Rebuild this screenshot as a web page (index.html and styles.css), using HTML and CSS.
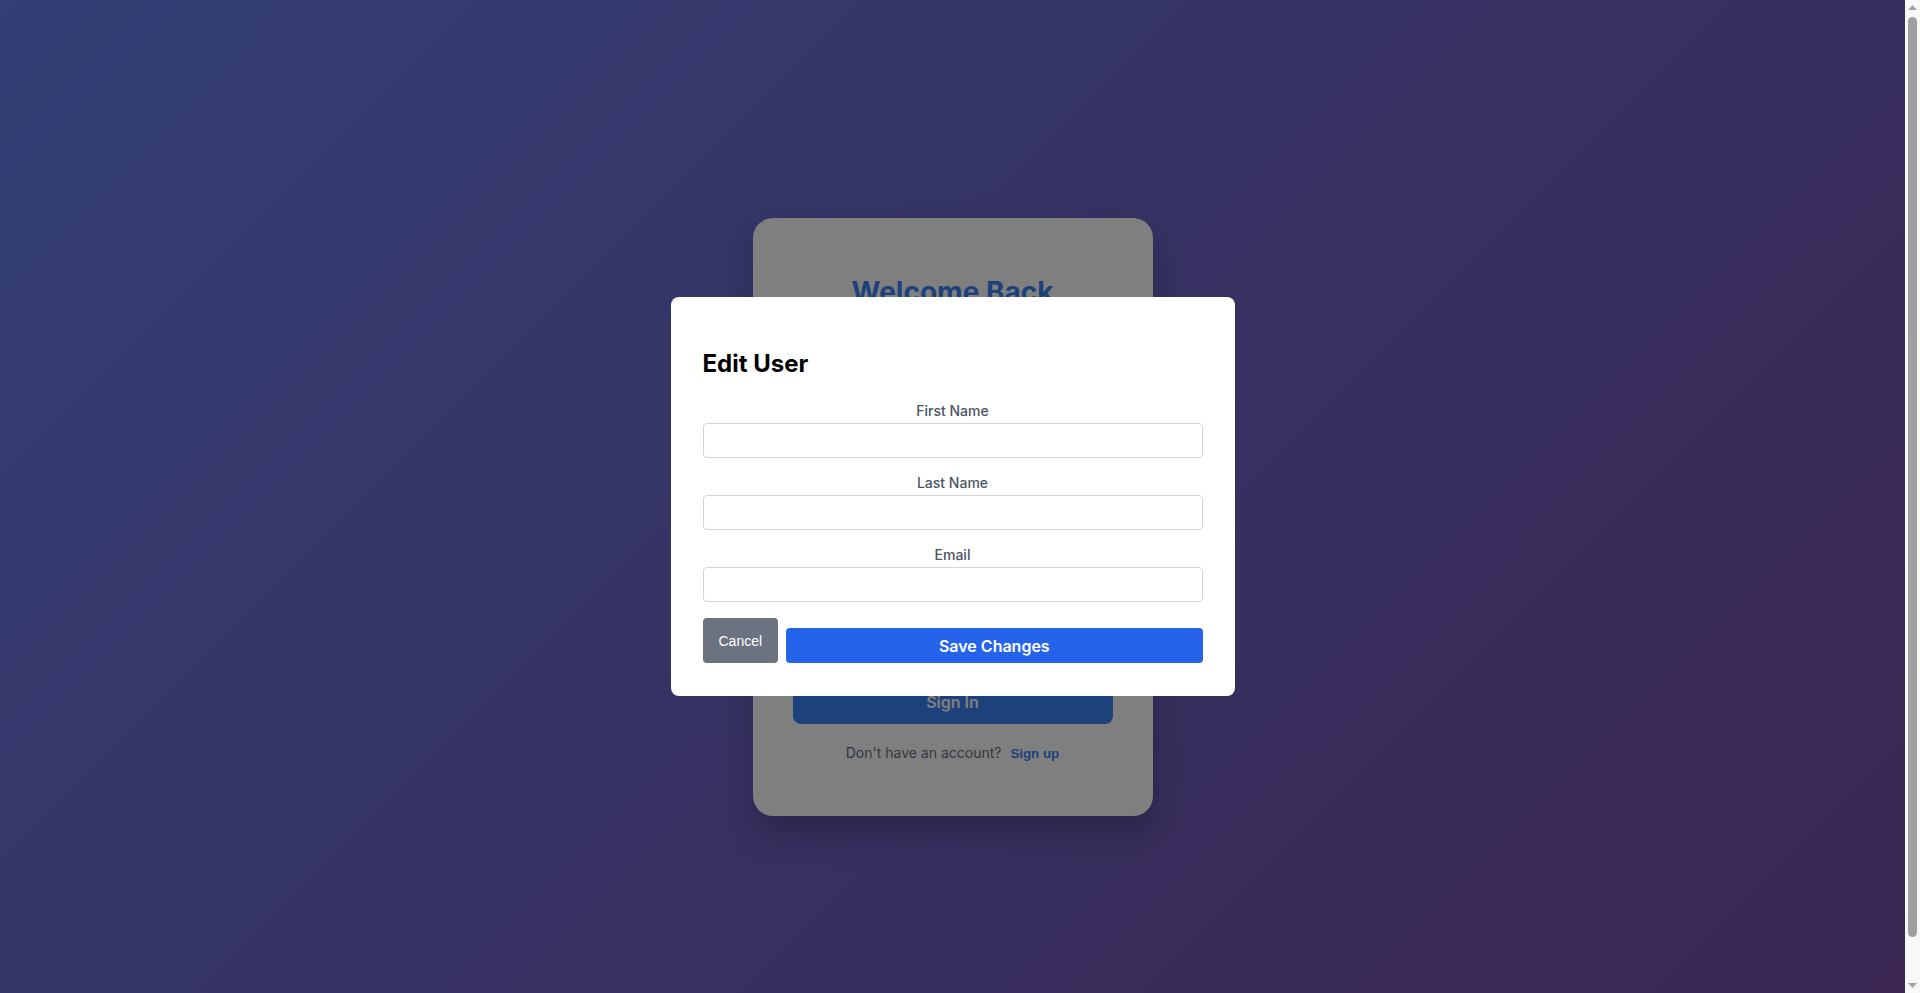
FILE: index.html
```html
<!DOCTYPE html>
<html lang="en">
<head>
<meta charset="utf-8">
<title>Login</title>
<link rel="stylesheet" href="styles.css">
</head>
<body>
  <div class="login-card">
    <h1 class="login-title">Welcome Back</h1>
    <p class="login-subtitle">Please sign in to your account</p>
    <form class="login-form">
      <div class="login-field">
        <label class="login-label">Username</label>
        <input class="login-input" type="text">
      </div>
      <div class="login-field">
        <label class="login-label">Email</label>
        <input class="login-input" type="email">
      </div>
      <div class="login-field">
        <label class="login-label">Password</label>
        <input class="login-input" type="password">
      </div>
      <div class="login-row">Remember me</div>
      <button class="signin-btn" type="button">Sign In</button>
    </form>
    <p class="signup-text">Don't have an account? <button class="signup-link" type="button">Sign up</button></p>
  </div>

  <div class="overlay">
    <div class="modal">
      <h2 class="modal-title">Edit User</h2>
      <div class="form-group">
        <label class="form-label">First Name</label>
        <input class="form-input" type="text">
      </div>
      <div class="form-group">
        <label class="form-label">Last Name</label>
        <input class="form-input" type="text">
      </div>
      <div class="form-group">
        <label class="form-label">Email</label>
        <input class="form-input" type="email">
      </div>
      <div class="modal-actions">
        <button class="btn-cancel" type="button">Cancel</button>
        <button class="btn-save" type="button">Save Changes</button>
      </div>
    </div>
  </div>

  <div class="scrollbar" aria-hidden="true">
    <div class="sb-button">
      <svg width="9" height="5" viewBox="0 0 9 5"><path d="M4.5 0 L9 5 L0 5 Z" fill="#a3a3a3"/></svg>
    </div>
    <div class="sb-track">
      <div class="sb-thumb"></div>
    </div>
    <div class="sb-button">
      <svg width="9" height="5" viewBox="0 0 9 5"><path d="M0 0 L9 0 L4.5 5 Z" fill="#a3a3a3"/></svg>
    </div>
  </div>
</body>
</html>
```

FILE: styles.css
```css
html {
  min-height: 100%;
}

body {
  margin: 0;
  padding: 20px 35px 20px 20px;
  min-height: 100vh;
  display: flex;
  align-items: center;
  justify-content: center;
  font-family: Inter, "Noto Sans", sans-serif;
  background: linear-gradient(135deg, #667eea 0%, #764ba2 100%);
}

.login-card {
  width: 320px;
  padding: 40px;
  background: #ffffff;
  border-radius: 20px;
  box-shadow: 0 15px 35px rgba(0, 0, 0, 0.25);
  text-align: center;
}

.login-title {
  margin: 17px 0 8px;
  font-size: 28px;
  font-weight: 700;
  line-height: 34px;
  color: #3b82f6;
}

.login-subtitle {
  margin: 0 0 33px;
  font-size: 15px;
  line-height: 18px;
  color: #6b7280;
}

.login-form {
  display: flex;
  flex-direction: column;
  gap: 22px;
  text-align: left;
}

.login-field {
  display: flex;
  flex-direction: column;
  gap: 6px;
}

.login-label {
  font-size: 14px;
  line-height: 17px;
  color: #374151;
}

.login-input {
  box-sizing: border-box;
  height: 46px;
  border: 1px solid #d1d5db;
  border-radius: 8px;
}

.login-row {
  font-size: 14px;
  line-height: 18px;
  color: #6b7280;
}

.signin-btn {
  height: 43px;
  border: none;
  border-radius: 8px;
  background: #3b82f6;
  color: #ffffff;
  font-family: Inter, sans-serif;
  font-size: 16px;
  font-weight: 600;
}

.signup-text {
  margin: 20px 0 14px;
  font-size: 14px;
  line-height: 18px;
  color: #6b7280;
}

.signup-link {
  margin-left: 5px;
  padding: 1px 0;
  border: none;
  background: none;
  color: #3b82f6;
  font-family: "Liberation Sans", Arial, sans-serif;
  font-size: 13.33px;
  font-weight: 700;
}

.overlay {
  position: fixed;
  top: 0;
  left: 0;
  bottom: 0;
  right: 15px;
  background: rgba(0, 0, 0, 0.5);
  display: flex;
  align-items: center;
  justify-content: center;
}

.modal {
  width: 500px;
  padding: 32px 32px 33px;
  background: #ffffff;
  border-radius: 8px;
}

.modal-title {
  margin: 20px 0 24px;
  font-size: 24px;
  font-weight: 700;
  line-height: 29px;
  color: #000000;
}

.form-group {
  margin-bottom: 16px;
}

.form-label {
  display: block;
  margin-bottom: 4px;
  font-size: 14px;
  font-weight: 500;
  line-height: 17px;
  color: #4b5563;
  text-align: center;
}

.form-input {
  display: block;
  box-sizing: border-box;
  width: 100%;
  height: 35px;
  padding: 8px;
  border: 1px solid #d1d5db;
  border-radius: 4px;
  font-family: Inter, sans-serif;
  font-size: 14px;
}

.modal-actions {
  display: flex;
  align-items: flex-end;
  gap: 8px;
}

.btn-cancel {
  padding: 14.5px 16px;
  border: none;
  border-radius: 4px;
  background: #6b7280;
  color: #ffffff;
  font-family: "Liberation Sans", Arial, sans-serif;
  font-size: 14px;
  line-height: 16px;
}

.btn-save {
  flex: 1;
  height: 35px;
  border: none;
  border-radius: 4px;
  background: #2563eb;
  color: #ffffff;
  font-family: Inter, sans-serif;
  font-size: 16px;
  font-weight: 600;
}

.scrollbar {
  position: fixed;
  top: 0;
  right: 0;
  bottom: 0;
  width: 15px;
  display: flex;
  flex-direction: column;
  background: #f8f8f8;
}

.sb-button {
  height: 15px;
  display: flex;
  align-items: center;
  justify-content: center;
}

.sb-track {
  flex: 1;
  padding: 2px 3px 0;
}

.sb-thumb {
  height: 920px;
  border-radius: 5px;
  background: #a0a0a0;
}
```
